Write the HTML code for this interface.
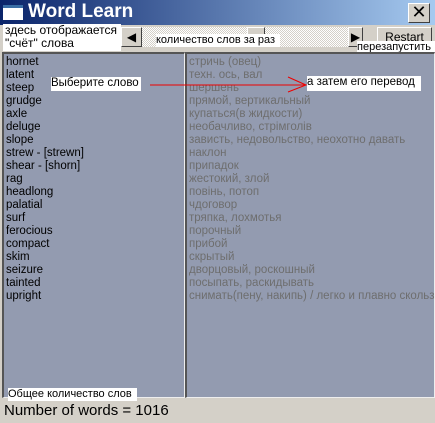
<html><head><style>
body{margin:0;width:435px;height:423px;background:#d4d0c8;position:relative;overflow:hidden;font-family:"Liberation Sans","DejaVu Sans",sans-serif}
.a{position:absolute}
.lab{position:absolute;background:#fff;color:#000;font-size:11px;line-height:13px}
.list{position:absolute;background:#939bb0;border-top:2px solid #555;border-left:2px solid #555;border-right:1px solid #eee;border-bottom:1px solid #eee;font-size:11.5px;line-height:13px;padding:2px 0 0 2px;box-sizing:border-box;white-space:nowrap;overflow:hidden}
.btn{position:absolute;background:#d4d0c8;border-top:1px solid #fff;border-left:1px solid #fff;border-right:1px solid #404040;border-bottom:1px solid #404040;box-sizing:border-box}
</style></head><body>
<div class="a" style="left:0;top:0;width:435px;height:25px;background:linear-gradient(90deg,#0a246a,#a6caf0)"></div>
<div class="a" style="left:3px;top:5px;width:20px;height:15px;background:#fff;border-top:3px solid #3a6ea5;box-sizing:border-box"></div>
<div class="a" style="left:28px;top:1px;color:#fff;font-weight:bold;font-size:19px;line-height:22px">Word Learn</div>
<div class="btn" style="left:408px;top:3px;width:22px;height:20px;font-size:18px;line-height:17px;text-align:center;font-weight:bold">✕</div>
<div class="a" style="left:142px;top:27px;width:208px;height:20px;background:repeating-conic-gradient(#d4d0c8 0 25%,#fff 0 50%) 0 0/2px 2px"></div>
<div class="btn" style="left:121px;top:27px;width:21px;height:20px;font-size:12px;line-height:18px;text-align:center">◀</div>
<div class="btn" style="left:247px;top:27px;width:18px;height:20px"></div>
<div class="btn" style="left:348px;top:27px;width:15px;height:20px;font-size:12px;line-height:18px;text-align:center">▶</div>
<div class="btn" style="left:377px;top:27px;width:55px;height:20px;font-size:12px;line-height:18px;text-align:center">Restart</div>
<div class="lab" style="left:3px;top:24px;width:116px;height:27px;font-size:12px;padding-left:2px">здесь отображается<br>"счёт" слова</div>
<div class="lab" style="left:156px;top:34px;width:124px;height:13px;font-size:11px">количество слов за раз</div>
<div class="lab" style="left:357px;top:41px;width:78px;height:14px;font-size:11px">перезапустить</div>
<div class="list" style="left:2px;top:52px;width:183px;height:346px;color:#000">hornet<br>latent<br>steep<br>grudge<br>axle<br>deluge<br>slope<br>strew - [strewn]<br>shear - [shorn]<br>rag<br>headlong<br>palatial<br>surf<br>ferocious<br>compact<br>skim<br>seizure<br>tainted<br>upright</div>
<div class="list" style="left:185px;top:52px;width:250px;height:346px;color:#6e6e6e">стричь (овец)<br>техн. ось, вал<br>шершень<br>прямой, вертикальный<br>купаться(в жидкости)<br>необачливо, стрімголів<br>зависть, недовольство, неохотно давать<br>наклон<br>припадок<br>жестокий, злой<br>повінь, потоп<br>чдоговор<br>тряпка, лохмотья<br>порочный<br>прибой<br>скрытый<br>дворцовый, роскошный<br>посыпать, раскидывать<br>снимать(пену, накипь) / легко и плавно скользить</div>
<div class="lab" style="left:51px;top:77px;width:90px;height:14px;font-size:11.5px">Выберите слово</div>
<div class="lab" style="left:307px;top:76px;width:114px;height:15px;font-size:11.5px">а затем его перевод</div>
<svg class="a" style="left:0;top:0" width="435" height="423"><path d="M150 85H306M288 77L306 85L288 92" stroke="#e00" fill="none"/></svg>
<div class="lab" style="left:8px;top:388px;width:129px;height:13px;font-size:11px">Общее количество слов</div>
<div class="a" style="left:4px;top:401px;font-size:15px;line-height:20px;color:#000">Number of words = 1016</div>
</body></html>
